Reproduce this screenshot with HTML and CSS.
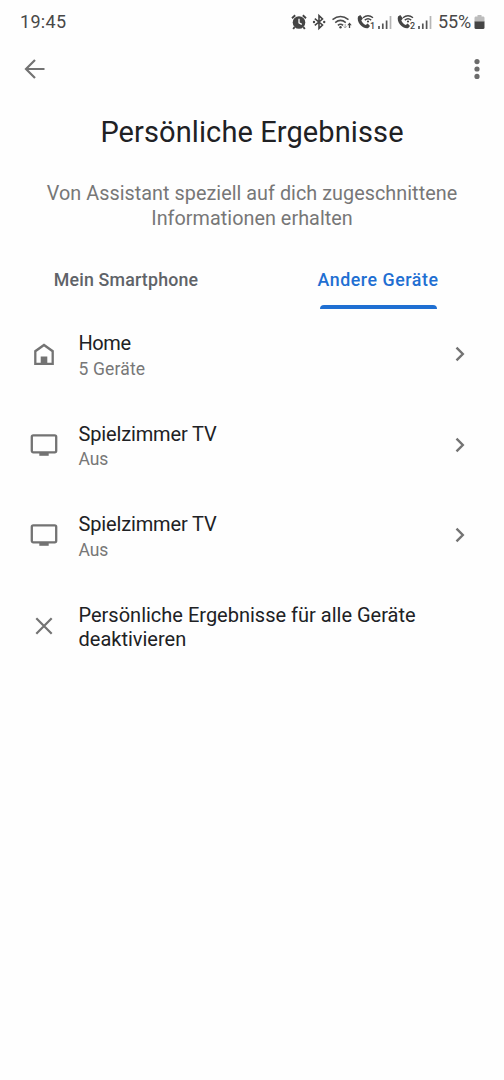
FILE: index.html
```html
<!DOCTYPE html>
<html lang="de">
<head>
<meta charset="utf-8">
<title>Persönliche Ergebnisse</title>
<link rel="stylesheet" href="styles.css">
</head>
<body>
<header class="status">
  <span class="clock">19:45</span>
  <div class="indicators">
    <svg class="alarm" width="16" height="16" viewBox="0 0 16 16"><circle cx="8" cy="8.5" r="6.300" fill="#454545"/><path d="M1 4.300 4.200 1.300M11.800 1.300 15 4.300M3.600 13 2.200 15M12.400 13l1.400 2" stroke="#454545" stroke-width="1.900"/><path d="M8 4.800v4l2.800 1.600" fill="none" stroke="#fff" stroke-width="1.300"/></svg>
    <svg class="bluetooth" width="14" height="16" viewBox="0 0 14 16"><path d="M2.800 4.700 10.500 11 7 14.300V1.700L10.500 5 2.800 11.300" fill="none" stroke="#454545" stroke-width="1.600"/><circle cx="2" cy="8" r="1.200" fill="#454545"/><circle cx="12.200" cy="8" r="1.200" fill="#454545"/></svg>
    <svg class="wifi" width="20" height="16" viewBox="0 0 20 16"><path d="M.5 5.700Q8.500-.8 16.500 5.700M3.200 8.600Q8.500 4.100 13.800 8.600M5.900 11.400Q8.500 9 11.100 11.400" fill="none" stroke="#4b4b4b" stroke-width="1.500"/><circle cx="8.500" cy="13.300" r="1.200" fill="#454545"/><path d="M13.200 10v4M11.700 12.300l1.500 1.700 1.500-1.700" fill="none" stroke="#aaa"/><path d="M17.500 14v-4" stroke="#454545" stroke-width="1.300"/><path d="m15.300 11.300 2.200-2.800 2.200 2.800z" fill="#454545"/></svg>
    <svg class="call" width="18" height="16" viewBox="0 0 18 16"><path d="M1 2.500 3.300 1l2.600 3.400-1.600 2c1 2 2.400 3.500 4.400 4.500l2-1.400 2.300 2.600-1.700 2C6.300 15.500-.8 8.500 1 2.500z" fill="#454545"/><path d="M6 3.700Q11-.3 16 3.700M7.800 6.100Q11 3.400 14.200 6.100" fill="none" stroke="#454545" stroke-width="1.400"/><circle cx="11" cy="7.500" r="1.100" fill="#454545"/><text class="sim" x="12.900" y="15">1</text></svg>
    <svg class="signal" width="14" height="16" viewBox="0 0 14 16"><path d="M1 12v3M4.800 9.500V15M8.600 6.500V15" stroke="#555" stroke-width="1.700"/><path d="M12.500 2v13" stroke="#b5b5b5" stroke-width="1.700"/></svg>
    <svg class="call" width="18" height="16" viewBox="0 0 18 16"><path d="M1 2.500 3.300 1l2.600 3.400-1.600 2c1 2 2.400 3.500 4.400 4.500l2-1.400 2.300 2.600-1.700 2C6.300 15.500-.8 8.500 1 2.500z" fill="#454545"/><path d="M6 3.700Q11-.3 16 3.700M7.800 6.100Q11 3.400 14.200 6.100" fill="none" stroke="#454545" stroke-width="1.400"/><circle cx="11" cy="7.500" r="1.100" fill="#454545"/><text class="sim" x="12.900" y="15">2</text></svg>
    <svg class="signal" width="14" height="16" viewBox="0 0 14 16"><path d="M1 12v3M4.800 9.500V15M8.600 6.500V15" stroke="#555" stroke-width="1.700"/><path d="M12.500 2v13" stroke="#b5b5b5" stroke-width="1.700"/></svg>
    <span class="percent">55%</span>
    <svg class="battery" width="11" height="16" viewBox="0 0 11 16"><path d="M1.500 2.500H3.500V1h4v1.500H9.500Q10.500 2.500 10.500 4V8H.5V4Q.5 2.500 1.500 2.500z" fill="#bcbcbc"/><path d="M.5 7.500h10v6q0 1.500-1.500 1.500H2Q.5 15 .5 13.500z" fill="#454545"/></svg>
  </div>
</header>
<nav class="appbar">
  <svg width="22" height="22" viewBox="0 0 22 22"><path d="M20.500 11H2.200M11 2 2 11l9 9" fill="none" stroke="#737373" stroke-width="2.200"/></svg>
  <svg width="6" height="22" viewBox="0 0 6 22"><g fill="#6b6b6b"><circle cx="3" cy="3.600" r="2.600"/><circle cx="3" cy="11" r="2.600"/><circle cx="3" cy="18.400" r="2.600"/></g></svg>
</nav>
<main>
  <h1 class="title">Persönliche Ergebnisse</h1>
  <p class="intro">Von Assistant speziell auf dich zugeschnittene<br>Informationen erhalten</p>
  <div class="tabs">
    <div class="tab"><span class="tab-phone">Mein Smartphone</span></div>
    <div class="tab active"><span class="tab-devices">Andere Geräte</span></div>
  </div>
  <ul class="list">
    <li class="row">
      <svg class="lead" width="28" height="28" viewBox="0 0 28 28"><path d="M5.300 23.900V11.200L14 5l8.700 6.200v12.700z" fill="none" stroke="#737373" stroke-width="2.300"/><path d="M10.700 16.500h6.600V24h-6.600z" fill="#737373"/></svg>
      <div class="label"><div class="name home">Home</div><div class="state devices">5 Geräte</div></div>
      <svg class="chevron" width="12" height="16" viewBox="0 0 12 16"><path d="m2.500 1.700 6.300 6.300-6.300 6.300" fill="none" stroke="#737373" stroke-width="2.400"/></svg>
    </li>
    <li class="row">
      <svg class="lead" width="28" height="28" viewBox="0 0 28 28"><rect x="1.800" y="4.300" width="24.400" height="17" rx="1.500" fill="none" stroke="#737373" stroke-width="2.300"/><path d="M9.300 21.500h9.400v3.300H9.300z" fill="#737373"/></svg>
      <div class="label"><div class="name tv">Spielzimmer TV</div><div class="state">Aus</div></div>
      <svg class="chevron" width="12" height="16" viewBox="0 0 12 16"><path d="m2.500 1.700 6.300 6.300-6.300 6.300" fill="none" stroke="#737373" stroke-width="2.400"/></svg>
    </li>
    <li class="row">
      <svg class="lead" width="28" height="28" viewBox="0 0 28 28"><rect x="1.800" y="4.300" width="24.400" height="17" rx="1.500" fill="none" stroke="#737373" stroke-width="2.300"/><path d="M9.300 21.500h9.400v3.300H9.300z" fill="#737373"/></svg>
      <div class="label"><div class="name tv">Spielzimmer TV</div><div class="state">Aus</div></div>
      <svg class="chevron" width="12" height="16" viewBox="0 0 12 16"><path d="m2.500 1.700 6.300 6.300-6.300 6.300" fill="none" stroke="#737373" stroke-width="2.400"/></svg>
    </li>
    <li class="row">
      <svg class="lead" width="28" height="28" viewBox="0 0 28 28"><path d="m6.300 6.300 15.400 15.400M21.700 6.300 6.300 21.700" stroke="#737373" stroke-width="2.200"/></svg>
      <div class="label disable"><div class="name">Persönliche Ergebnisse für alle Geräte<br>deaktivieren</div></div>
    </li>
  </ul>
</main>
</body>
</html>
```
FILE: styles.css
```css
* { box-sizing: border-box; }
body { margin: 0; width: 504px; min-height: 1080px; background: #fefefe; font-family: Roboto, "Noto Sans", sans-serif; color: #202124; }
svg { display: block; flex: none; overflow: visible; }
.status { height: 44px; padding: 0 19px 0 20px; display: flex; justify-content: space-between; align-items: center; color: #484848; font-size: 18px; line-height: 44px; }
.clock { letter-spacing: .3px; }
.indicators { display: flex; align-items: center; }
.bluetooth { margin-left: 5px; }
.wifi { margin-left: 6px; }
.call { margin-left: 5px; }
.signal { margin-left: 3px; }
.percent { margin-left: 6px; width: 36px; letter-spacing: -.1px; }
.sim { font-size: 9px; fill: #454545; font-weight: 500; }
.appbar { height: 50px; padding: 0 24px; display: flex; justify-content: space-between; align-items: center; }
.title { margin: 18px 0 0; height: 40px; line-height: 40px; font-size: 29px; font-weight: 400; text-align: center; letter-spacing: .1px; }
.intro { margin: 30px 0 0; text-align: center; color: #777; font-size: 19.800px; line-height: 24.500px; white-space: nowrap; letter-spacing: .04px; }
.tabs { display: grid; grid-template-columns: 1fr 1fr; height: 58px; margin-top: 20px; }
.tab { display: flex; flex-direction: column; align-items: center; justify-content: space-between; padding-top: 15px; font-size: 17.800px; line-height: 28px; font-weight: 500; color: #5f6368; }
.tab-phone { letter-spacing: .18px; }
.tab-devices { letter-spacing: .55px; }
.active { color: #1f6fd2; }
.active::after { content: ""; width: 117px; height: 4px; border-radius: 4px 4px 0 0; background: #1f6fd2; }
.list { list-style: none; margin: 0; padding: 0; }
.row { height: 90.500px; padding: 0 38px 0 30px; display: flex; align-items: center; }
.label { flex: 1; padding: 4.500px 0 0 20.500px; }
.disable { padding-top: 3px; }
.name { font-size: 20px; line-height: 24.500px; white-space: nowrap; }
.home { letter-spacing: -.4px; }
.tv { letter-spacing: -.15px; }
.state { font-size: 17.500px; line-height: 25px; padding-top: 1px; color: #777; letter-spacing: -.1px; }
.devices { letter-spacing: .15px; }
```
